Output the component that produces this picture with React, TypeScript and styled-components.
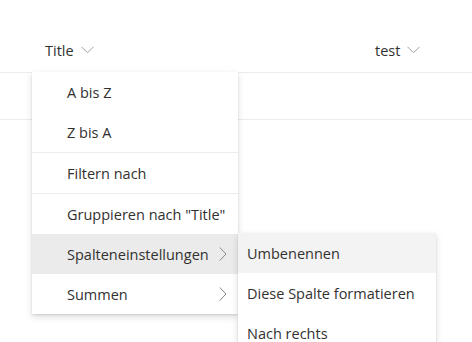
import { createGlobalStyle } from "styled-components";
import styled from "styled-components";

const GlobalStyle = createGlobalStyle`
  html, body {
    margin: 0;
    padding: 0;
    background: #ffffff;
  }
  body {
    font-family: "Open Sans", "Noto Sans", "Liberation Sans", sans-serif;
    color: #323130;
  }
`

const Page = styled.div`
  position: relative;
  width: 472px;
  height: 342px;
  overflow: hidden;
  background: #ffffff;
`

const HeaderRow = styled.div`
  display: flex;
  align-items: center;
  height: 73px;
  padding-top: 28px;
  box-sizing: border-box;
  border-bottom: 1px solid #ececec;
`

const HeaderCell = styled.div<{ $width?: number; $pad: number }>`
  display: flex;
  align-items: center;
  gap: 7px;
  padding-left: ${(p) => p.$pad}px;
  width: ${(p) => (p.$width ? p.$width + "px" : "auto")};
  box-sizing: border-box;
  font-size: 14.5px;
  font-weight: 500;
  color: #323130;
`

const DataRow = styled.div`
  height: 46px;
  border-bottom: 1px solid #ececec;
`

const Menu = styled.div<{ $left: number; $top: number; $width: number }>`
  position: absolute;
  left: ${(p) => p.$left}px;
  top: ${(p) => p.$top}px;
  width: ${(p) => p.$width}px;
  background: #ffffff;
  display: flex;
  flex-direction: column;
  box-shadow: 0 3.2px 7.2px rgba(0, 0, 0, 0.132), 0 0.6px 1.8px rgba(0, 0, 0, 0.108);
`

const Item = styled.div<{ $pad: number; $bg?: string }>`
  display: flex;
  align-items: center;
  justify-content: space-between;
  height: 40px;
  padding-left: ${(p) => p.$pad}px;
  padding-right: 11px;
  background: ${(p) => p.$bg ?? "transparent"};
  font-size: 14.5px;
  color: #323130;
  white-space: nowrap;
`

const Divider = styled.div`
  height: 1px;
  background: #ececec;
`

function ChevronDown() {
  return (
    <svg width="13" height="8" viewBox="0 0 13 8">
      <path d="M0.5 0.8 L6.5 6.8 L12.5 0.8" fill="none" stroke="#a19f9d" strokeWidth="1" />
    </svg>
  );
}

function ChevronRight() {
  return (
    <svg width="8" height="14" viewBox="0 0 8 14">
      <path d="M0.8 0.5 L7 7 L0.8 13.5" fill="none" stroke="#8a8886" strokeWidth="1" />
    </svg>
  );
}

export default function App() {
  return (
    <Page>
      <GlobalStyle />
      <HeaderRow>
        <HeaderCell $pad={45} $width={375}>
          Title <ChevronDown />
        </HeaderCell>
        <HeaderCell $pad={0}>
          test <ChevronDown />
        </HeaderCell>
      </HeaderRow>
      <DataRow />

      <Menu $left={32} $top={72} $width={206}>
        <Item $pad={35}>A bis Z</Item>
        <Item $pad={35}>Z bis A</Item>
        <Divider />
        <Item $pad={35}>Filtern nach</Item>
        <Divider />
        <Item $pad={35}>Gruppieren nach "Title"</Item>
        <Item $pad={35} $bg="#ebebeb">
          Spalteneinstellungen <ChevronRight />
        </Item>
        <Item $pad={35}>
          Summen <ChevronRight />
        </Item>
      </Menu>

      <Menu $left={238} $top={233} $width={198}>
        <Item $pad={9} $bg="#f3f3f3">Umbenennen</Item>
        <Item $pad={9}>Diese Spalte formatieren</Item>
        <Item $pad={9}>Nach rechts</Item>
      </Menu>
    </Page>
  );
}
